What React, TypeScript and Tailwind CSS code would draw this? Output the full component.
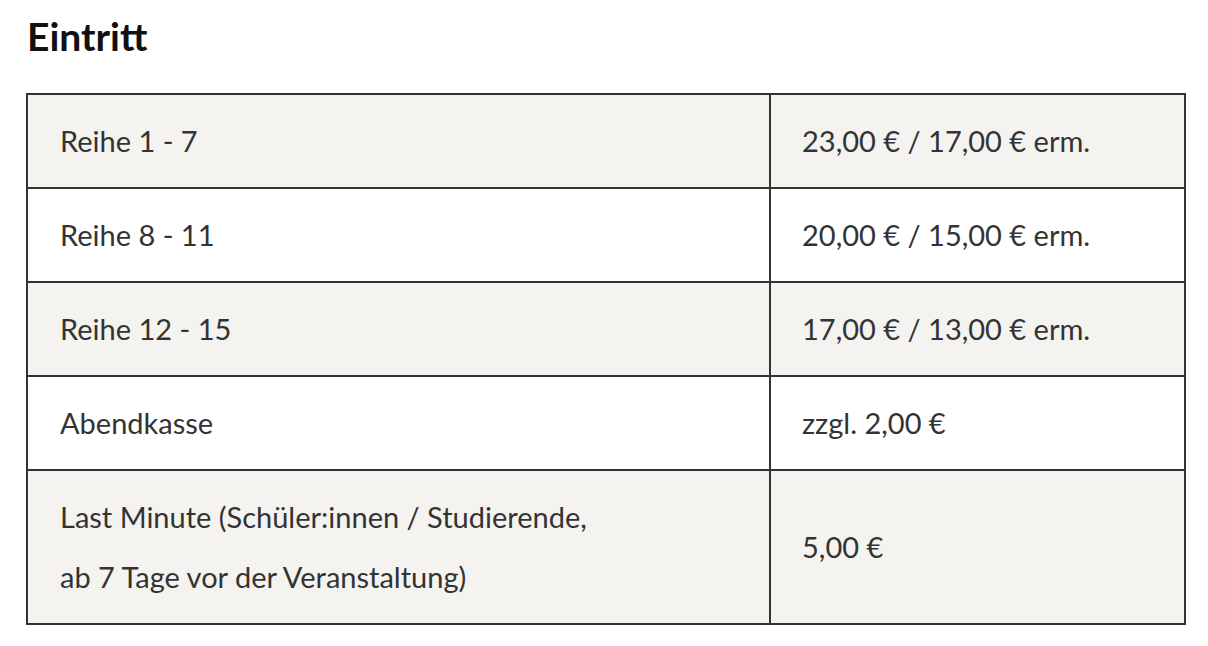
type PriceRow = {
  label: string[];
  price: string;
};

const rows: PriceRow[] = [
  { label: ["Reihe 1 - 7"], price: "23,00 € / 17,00 € erm." },
  { label: ["Reihe 8 - 11"], price: "20,00 € / 15,00 € erm." },
  { label: ["Reihe 12 - 15"], price: "17,00 € / 13,00 € erm." },
  { label: ["Abendkasse"], price: "zzgl. 2,00 €" },
  {
    label: ["Last Minute (Schüler:innen / Studierende,", "ab 7 Tage vor der Veranstaltung)"],
    price: "5,00 €",
  },
];

export default function App() {
  return (
    <div className="min-h-screen bg-white pl-[26px] pr-[22px] pt-[12px] font-['Lato','Liberation_Sans',sans-serif] text-[#333]">
      <h2 className="mb-[33px] pl-px text-[39px] font-bold leading-[48px] text-[#111]">Eintritt</h2>
      <table className="w-[1160px] table-fixed border-collapse">
        <colgroup>
          <col className="w-[743px]" />
          <col />
        </colgroup>
        <tbody>
          {rows.map((row, i) => (
            <tr key={row.price} className={i % 2 === 0 ? "bg-[#f4f3f0]" : "bg-white"}>
              <td className="border-2 border-[#333] px-8 py-4 align-middle text-[29px] leading-[60px]">
                {row.label.map((line) => (
                  <div key={line}>{line}</div>
                ))}
              </td>
              <td className="border-2 border-[#333] px-[31px] py-4 align-middle text-[29px] leading-[60px]">
                {row.price}
              </td>
            </tr>
          ))}
        </tbody>
      </table>
    </div>
  );
}
